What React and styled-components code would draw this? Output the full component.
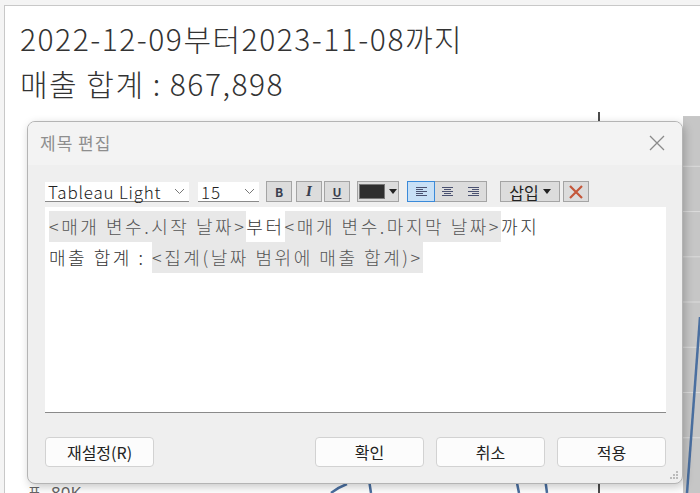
import React from 'react';
import styled, { createGlobalStyle } from 'styled-components';

const GlobalStyle = createGlobalStyle`
  html, body {
    margin: 0;
    padding: 0;
    background: #f4f4f4;
  }
  * {
    box-sizing: border-box;
  }
`;

const FONT = `"Noto Sans CJK KR", "Noto Sans", sans-serif`;

const Page = styled.div`
  position: relative;
  width: 700px;
  height: 493px;
  overflow: hidden;
  padding: 5px 0 0 4px;
  background: #f4f4f4;
  font-family: ${FONT};
`;

const Sheet = styled.div`
  height: 100%;
  background: #fff;
  border-top: 1px solid #c8c8c8;
  border-left: 1px solid #c8c8c8;
  display: flex;
  flex-direction: column;
`;

const Heading = styled.div`
  padding: 10px 0 0 15px;
  color: #333;
  font-size: 30px;
  font-weight: 300;
  line-height: 45px;
  letter-spacing: 1.5px;
`;

const Chart = styled.svg`
  display: block;
  flex: 1;
  width: 100%;
`;

const Dialog = styled.div`
  position: absolute;
  left: 27px;
  top: 121px;
  width: 656px;
  height: 363px;
  background: #efefef;
  border: 1px solid #b4b4b4;
  border-radius: 8px;
  box-shadow: 2px 3px 10px rgba(0, 0, 0, 0.22);
  display: flex;
  flex-direction: column;
  overflow: hidden;
`;

const TitleBar = styled.div`
  height: 43px;
  flex: none;
  background: #f3f3f3;
  display: flex;
  align-items: center;
  justify-content: space-between;
  padding: 0 16px 2px 12px;
`;

const DialogTitle = styled.div`
  font-size: 17px;
  color: #8e8e8e;
  letter-spacing: 1px;
`;

const CloseButton = styled.button`
  width: 18px;
  height: 18px;
  padding: 0;
  border: none;
  background: none;
  display: flex;
  align-items: center;
  justify-content: center;
`;

const Body = styled.div`
  flex: 1;
  display: flex;
  flex-direction: column;
  padding: 16px 16px 0 17px;
`;

const Toolbar = styled.div`
  display: flex;
  align-items: center;
  height: 21px;
`;

const Select = styled.div`
  width: ${p => p.$w}px;
  height: 20px;
  margin-right: ${p => p.$mr || 0}px;
  background: #fff;
  border-bottom: 1px solid #8a8a8a;
  display: flex;
  align-items: center;
  justify-content: space-between;
  padding: 0 4px 0 3px;
  font-size: 17px;
  font-weight: 300;
  letter-spacing: 0.8px;
  color: #222;
  line-height: 1;
`;

const ToolButton = styled.div`
  width: ${p => p.$w || 26}px;
  height: 21px;
  margin-left: ${p => p.$ml || 0}px;
  background: #dcdcdc;
  border: 1px solid #a4a4a4;
  display: flex;
  align-items: center;
  justify-content: center;
  gap: 4px;
  font-size: 12px;
  font-weight: bold;
  color: #3a3f4f;
  line-height: 1;
`;

const AlignGroup = styled.div`
  display: flex;
  margin-left: 8px;
  border: 1px solid #a4a4a4;
  background: #dcdcdc;
  height: 21px;
`;

const AlignButton = styled.div`
  width: 26px;
  height: 19px;
  display: flex;
  align-items: center;
  justify-content: center;
  background: ${p => (p.$active ? '#c8e0f6' : 'transparent')};
  outline: ${p => (p.$active ? '1px solid #3b8ad9' : 'none')};
`;

const Swatch = styled.div`
  width: 26px;
  height: 15px;
  background: #2e2e2e;
  border: 1px solid #777;
`;

const Caret = styled.span`
  width: 0;
  height: 0;
  border-left: 4px solid transparent;
  border-right: 4px solid transparent;
  border-top: 5px solid #222;
`;

const InsertLabel = styled.span`
  font-size: 16px;
  font-weight: normal;
  color: #222;
`;

const Editor = styled.div`
  margin-top: 5px;
  height: 206px;
  background: #fff;
  border-bottom: 1px solid #8a8a8a;
  padding: 4px 4px;
  font-size: 18px;
  font-weight: 300;
  letter-spacing: 2.55px;
  color: #333;
`;

const Line = styled.div`
  height: 31px;
  line-height: 31px;
  white-space: nowrap;
  display: flex;
`;

const Token = styled.span`
  background: #e8e8e8;
  color: #555;
`;

const Plain = styled.span`
  white-space: pre;
`;

const Footer = styled.div`
  display: flex;
  gap: 12px;
  margin-top: 24px;
`;

const Button = styled.button`
  width: 109px;
  height: 30px;
  margin-right: ${p => (p.$push ? 'auto' : '0')};
  background: #fcfcfc;
  border: 1px solid #d2d2d2;
  border-radius: 4px;
  font-family: ${FONT};
  font-size: 16px;
  color: #222;
  padding: 0;
`;

const Grip = styled.svg`
  position: absolute;
  right: 3px;
  bottom: 3px;
`;

const Chevron = () => (
  <svg width="11" height="7" viewBox="0 0 11 7">
    <path d="M1 1l4.5 4.5L10 1" fill="none" stroke="#777" strokeWidth="1" />
  </svg>
);

const AlignIcon = ({ mode }) => {
  const lens = [11, 7, 11, 7, 11];
  return (
    <svg width="11" height="10" viewBox="0 0 11 10">
      {lens.map((len, i) => {
        let x = 0;
        if (mode === 'center') x = (11 - len) / 2;
        if (mode === 'right') x = 11 - len;
        return <rect key={i} x={x} y={i * 2} width={len} height="1" fill="#4a5170" />;
      })}
    </svg>
  );
};

export default function App() {
  return (
    <>
      <GlobalStyle />
      <Page>
        <Sheet>
          <Heading>
            <div>2022-12-09부터2023-11-08까지</div>
            <div>매출 합계 : 867,898</div>
          </Heading>
          <Chart viewBox="0 0 695 385" preserveAspectRatio="none">
            <rect x="678" y="10" width="17" height="375" fill="#c6c6c6" />
            {[60, 105, 150, 195, 240, 285, 330].map(y => (
              <line key={y} x1="678" x2="695" y1={y} y2={y} stroke="#dcdcdc" strokeWidth="1" />
            ))}
            <line x1="594" x2="594" y1="6" y2="385" stroke="#111" strokeWidth="1.5" />
            <path d="M695 210 L682 385" stroke="#4a6fa0" strokeWidth="2.5" fill="none" />
            <path d="M326 385 Q334 379 342 376 M364 372 L366 385 M511 370 L514 385 M540 370 L542 385"
              stroke="#4a6fa0" strokeWidth="2.5" fill="none" />
            <text x="46" y="391" fontSize="17" fill="#666" fontFamily="Noto Sans">80K</text>
            <text x="23" y="389" fontSize="14" fill="#666" fontFamily="Noto Sans CJK KR">표</text>
          </Chart>
        </Sheet>

        <Dialog>
          <TitleBar>
            <DialogTitle>제목 편집</DialogTitle>
            <CloseButton>
              <svg width="16" height="16" viewBox="0 0 16 16">
                <path d="M1 1l14 14M15 1L1 15" stroke="#8a8a8a" strokeWidth="1.3" />
              </svg>
            </CloseButton>
          </TitleBar>
          <Body>
            <Toolbar>
              <Select $w={144} $mr={9}>
                <span>Tableau Light</span>
                <Chevron />
              </Select>
              <Select $w={61} $mr={7}>
                <span>15</span>
                <Chevron />
              </Select>
              <ToolButton>B</ToolButton>
              <ToolButton $ml={4}><i style={{ fontFamily: 'DejaVu Serif' }}>I</i></ToolButton>
              <ToolButton $ml={2}><u>U</u></ToolButton>
              <ToolButton $w={42} $ml={7}>
                <Swatch />
                <Caret />
              </ToolButton>
              <AlignGroup>
                <AlignButton $active><AlignIcon mode="left" /></AlignButton>
                <AlignButton><AlignIcon mode="center" /></AlignButton>
                <AlignButton><AlignIcon mode="right" /></AlignButton>
              </AlignGroup>
              <ToolButton $w={60} $ml={13}>
                <InsertLabel>삽입</InsertLabel>
                <Caret />
              </ToolButton>
              <ToolButton $w={26} $ml={3}>
                <svg width="16" height="16" viewBox="0 0 16 16">
                  <path d="M2 2l12 12M14 2L2 14" stroke="#c4573a" strokeWidth="2.2" />
                </svg>
              </ToolButton>
            </Toolbar>

            <Editor>
              <Line>
                <Token>&lt;매개 변수.시작 날짜&gt;</Token>
                <Plain>부터</Plain>
                <Token>&lt;매개 변수.마지막 날짜&gt;</Token>
                <Plain>까지</Plain>
              </Line>
              <Line>
                <Plain>매출 합계 : </Plain>
                <Token>&lt;집계(날짜 범위에 매출 합계)&gt;</Token>
              </Line>
            </Editor>

            <Footer>
              <Button $push>재설정(R)</Button>
              <Button>확인</Button>
              <Button>취소</Button>
              <Button>적용</Button>
            </Footer>
          </Body>
          <Grip width="9" height="9" viewBox="0 0 9 9">
            {[[6, 0], [3, 3], [6, 3], [0, 6], [3, 6], [6, 6]].map(([x, y]) => (
              <rect key={`${x}-${y}`} x={x} y={y} width="2" height="2" fill="#bbb" />
            ))}
          </Grip>
        </Dialog>
      </Page>
    </>
  );
}
